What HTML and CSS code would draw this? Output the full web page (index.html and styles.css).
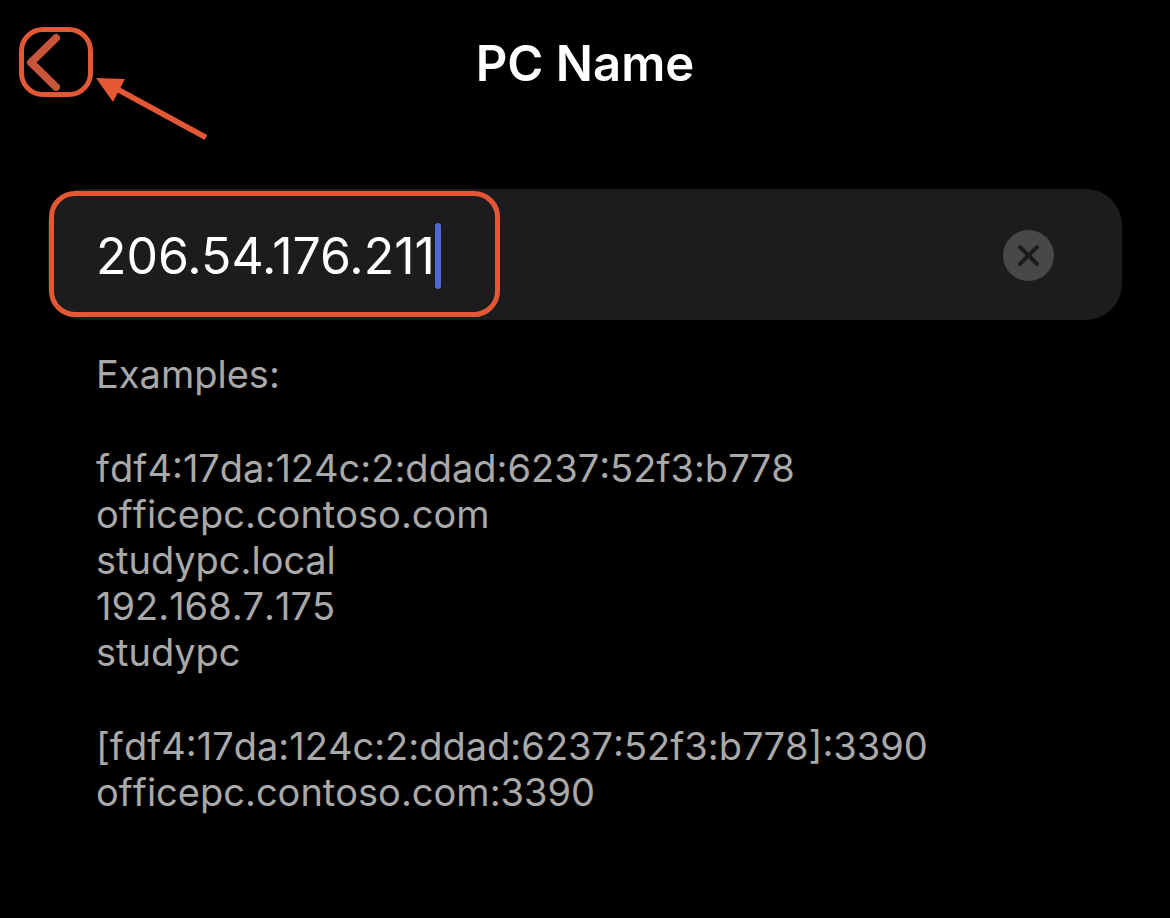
FILE: index.html
```html
<!DOCTYPE html>
<html lang="en">
<head>
  <meta charset="UTF-8" />
  <meta name="viewport" content="width=device-width, initial-scale=1" />
  <title>PC Name</title>
  <link rel="stylesheet" href="styles.css">
</head>
<body>
  <header class="navbar">
    <button class="back" type="button" aria-label="Back">
      <svg width="36" height="58" viewBox="0 0 36 58" aria-hidden="true">
        <path d="M32 5 L7 29.5 L32 54" />
      </svg>
    </button>
    <h1>PC Name</h1>
    <svg class="arrow" width="112" height="64" viewBox="0 0 112 64" aria-hidden="true">
      <path class="arrow-line" d="M20 12.5 L110 61.5" />
      <path class="arrow-head" d="M0 2 L29 3 L17 26 Z" />
    </svg>
  </header>

  <main>
    <div class="field">
      <input id="pcName" class="field-input" type="text" size="10" value="206.54.176.211" aria-label="PC Name" autocomplete="off" spellcheck="false">
      <span class="caret"></span>
      <button id="clearName" class="clear" type="button" aria-label="Clear text">
        <svg width="51" height="51" viewBox="0 0 51 51" aria-hidden="true">
          <path d="M17 17 L34 34 M34 17 L17 34" />
        </svg>
      </button>
      <div class="highlight"></div>
    </div>

    <section class="examples">
      <p>Examples:</p>
      <p>
        fdf4:17da:124c:2:ddad:6237:52f3:b778<br>
        officepc.contoso.com<br>
        studypc.local<br>
        192.168.7.175<br>
        studypc
      </p>
      <p>
        [fdf4:17da:124c:2:ddad:6237:52f3:b778]:3390<br>
        officepc.contoso.com:3390
      </p>
    </section>
  </main>

  <script>
    const pcName = document.getElementById("pcName");

    document.getElementById("clearName").addEventListener("click", () => {
      pcName.value = "";
      pcName.focus();
    });
  </script>
</body>
</html>
```
FILE: styles.css
```css
:root {
  --accent: #e45735;
  --field-bg: #1c1c1e;
  --text-muted: #a9a9a9;
  --caret: #5069d6;
}

* {
  box-sizing: border-box;
}

body {
  margin: 0;
  min-height: 100vh;
  background: #000;
  color: #fff;
  font-family: Inter, "Liberation Sans", sans-serif;
}

button {
  padding: 0;
  border: none;
  background: none;
  cursor: pointer;
}

.navbar {
  position: relative;
  display: grid;
  grid-template-columns: 1fr auto 1fr;
  align-items: start;
  padding: 27px 19px 0;
}

.navbar h1 {
  margin: 0;
  font-size: 49px;
  font-weight: 600;
  line-height: 74px;
}

.back {
  display: flex;
  align-items: center;
  width: 74px;
  height: 70px;
  border: 5px solid var(--accent);
  border-radius: 24px;
}

.back path {
  fill: none;
  stroke: #c8543c;
  stroke-width: 8;
  stroke-linecap: round;
  stroke-linejoin: round;
}

/* pointer to the back button */
.arrow {
  position: absolute;
  left: 96px;
  top: 76px;
}

.arrow-line {
  stroke: var(--accent);
  stroke-width: 5.5;
}

.arrow-head {
  fill: var(--accent);
}

main {
  padding: 88px 48px 48px;
}

.field {
  position: relative;
  display: flex;
  align-items: center;
  height: 131px;
  padding: 2px 68px 0 48px;
  border-radius: 36px;
  background: var(--field-bg);
}

.field-input {
  field-sizing: content;
  min-width: 0;
  padding: 0;
  border: none;
  outline: none;
  background: none;
  color: #fff;
  font-family: inherit;
  font-size: 50px;
  line-height: 66px;
  caret-color: transparent;
}

.caret {
  width: 6px;
  height: 66px;
  border-radius: 3px;
  background: var(--caret);
}

.clear {
  display: flex;
  margin-left: auto;
  border-radius: 50%;
  background: #48484a;
}

.clear path {
  stroke: var(--field-bg);
  stroke-width: 4;
  stroke-linecap: round;
}

.highlight {
  position: absolute;
  top: 2px;
  bottom: 3px;
  left: 1px;
  width: 451px;
  border: 5px solid var(--accent);
  border-radius: 26px;
  pointer-events: none;
}

.examples {
  display: flex;
  flex-direction: column;
  gap: 48px;
  padding: 31px 48px 0;
  color: var(--text-muted);
  font-size: 38px;
  font-kerning: none;
  line-height: 46px;
}

.examples p {
  margin: 0;
}
```
